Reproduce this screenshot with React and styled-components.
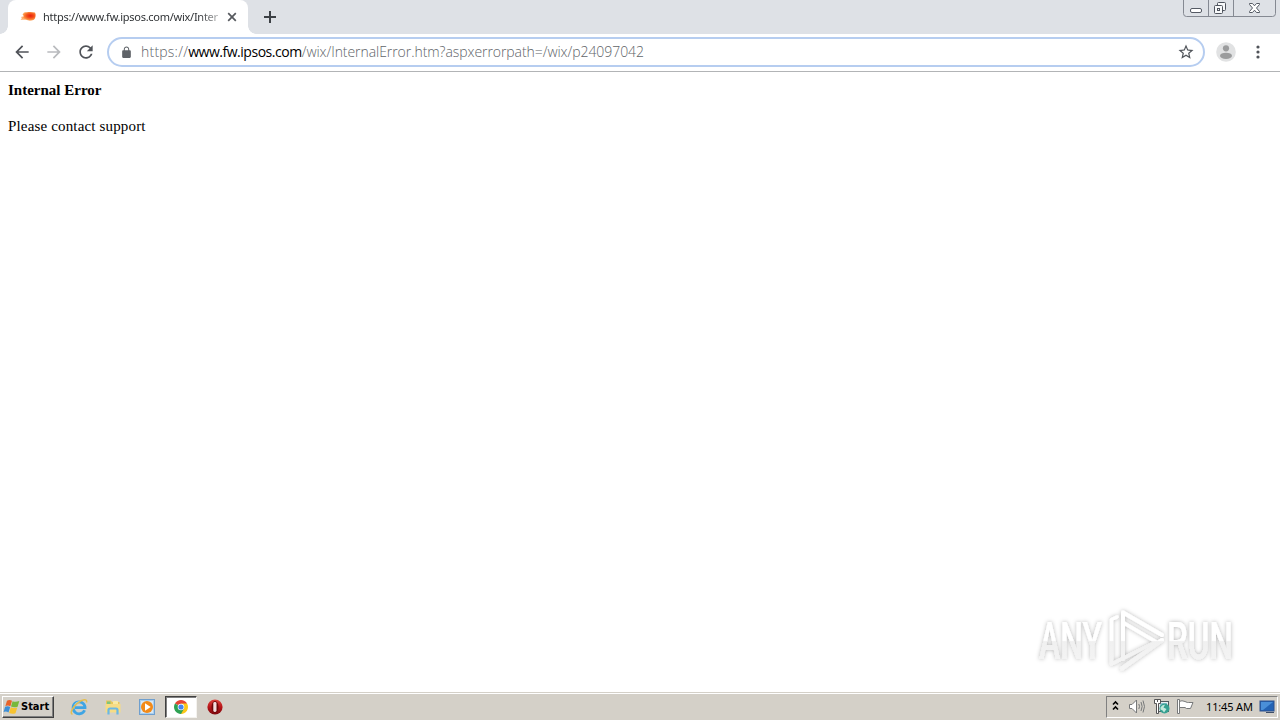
import React from "react";
import styled, { createGlobalStyle } from "styled-components";

const App = () => {
  return (
    <Screen>
      <GlobalStyle />
      <TabStrip>
        <Tab>
          <Favicon />
          <TabTitle>https://www.fw.ipsos.com/wix/Inter</TabTitle>
          <CloseIcon />
        </Tab>
        <NewTabIcon />
        <WindowControls />
      </TabStrip>
      <Toolbar>
        <NavIcon d="M20 11H7.83l5.59-5.59L12 4l-8 8 8 8 1.41-1.41L7.83 13H20v-2z" />
        <NavIcon
          muted
          d="M12 4l-1.41 1.41L16.17 11H4v2h12.17l-5.58 5.59L12 20l8-8z"
        />
        <NavIcon d="M17.65 6.35C16.2 4.9 14.21 4 12 4c-4.42 0-7.99 3.58-7.99 8s3.57 8 7.99 8c3.73 0 6.84-2.55 7.73-6h-2.08c-.82 2.33-3.04 4-5.65 4-3.31 0-6-2.69-6-6s2.69-6 6-6c1.66 0 3.14.69 4.22 1.78L13 11h7V4l-2.35 2.35z" />
        <AddressBar>
          <svg width="13" height="13" viewBox="0 0 24 24" fill="#5f6368">
            <path d="M18 8h-1V6c0-2.76-2.24-5-5-5S7 3.24 7 6v2H6c-1.1 0-2 .9-2 2v10c0 1.1.9 2 2 2h12c1.1 0 2-.9 2-2V10c0-1.1-.9-2-2-2zm-2.9 0H8.9V6c0-1.71 1.39-3.1 3.1-3.1 1.71 0 3.1 1.39 3.1 3.1v2z" />
          </svg>
          <Url>
            <UrlPart $spacing="0.22px">https://</UrlPart>
            <UrlPart $host $spacing="-0.47px">
              www.fw.ipsos.com
            </UrlPart>
            <UrlPart $spacing="-0.06px">
              /wix/InternalError.htm?aspxerrorpath=/wix/p24097042
            </UrlPart>
          </Url>
          <svg width="18" height="18" viewBox="0 0 24 24" fill="#50545a">
            <path d="M22 9.24l-7.19-.62L12 2 9.19 8.63 2 9.24l5.46 4.73L5.82 21 12 17.27 18.18 21l-1.63-7.03L22 9.24zM12 15.4l-3.76 2.27 1-4.28-3.32-2.88 4.38-.38L12 6.1l1.71 4.04 4.38.38-3.32 2.88 1 4.28L12 15.4z" />
          </svg>
        </AddressBar>
        <Avatar />
        <MenuIcon />
      </Toolbar>
      <Page>
        <ErrorTitle>Internal Error</ErrorTitle>
        <ErrorText>Please contact support</ErrorText>
        <Watermark />
      </Page>
      <Taskbar>
        <StartButton>
          <WindowsLogo />
          <span>Start</span>
        </StartButton>
        <QuickLaunch>
          <TaskItem>
            <ExplorerIcon />
          </TaskItem>
          <TaskItem>
            <FolderIcon />
          </TaskItem>
          <TaskItem>
            <PlayerIcon />
          </TaskItem>
          <TaskItem $active>
            <ChromeIcon />
          </TaskItem>
          <TaskItem>
            <OperaIcon />
          </TaskItem>
        </QuickLaunch>
        <Tray>
          <TrayIcons />
          <Clock>11:45 AM</Clock>
          <DesktopIcon />
        </Tray>
      </Taskbar>
    </Screen>
  );
};

const NavIcon = ({ d, muted }) => (
  <NavButton>
    <svg
      width="20"
      height="20"
      viewBox="0 0 24 24"
      fill={muted ? "#b9bbbe" : "#505359"}
    >
      <path d={d} />
    </svg>
  </NavButton>
);

const Favicon = () => (
  <svg width="16" height="16" viewBox="0 0 16 16">
    <defs>
      <radialGradient id="fav" cx="0.65" cy="0.45" r="0.55">
        <stop offset="0" stopColor="#e8200c" />
        <stop offset="0.45" stopColor="#f4501c" />
        <stop offset="0.8" stopColor="#fb8b3c" />
        <stop offset="1" stopColor="#fdb070" />
      </radialGradient>
    </defs>
    <path
      d="M4 3.5C7 2.8 12 2.6 15 3.4C16.2 5.5 15.7 9 14 10.8C11 12 8 11.8 6 10.8L0.6 10.8L2 9L0.8 8L4 7.2L2.5 5.4Z"
      fill="url(#fav)"
    />
  </svg>
);

const CloseIcon = () => (
  <svg width="10" height="10" viewBox="0 0 10 10">
    <path
      d="M1.2 1.2L8.8 8.8M8.8 1.2L1.2 8.8"
      stroke="#56595e"
      strokeWidth="1.7"
    />
  </svg>
);

const NewTabIcon = () => (
  <NewTab>
    <svg width="12" height="12" viewBox="0 0 12 12">
      <path d="M6 0V12M0 6H12" stroke="#3c4045" strokeWidth="2" />
    </svg>
  </NewTab>
);

const WindowControls = () => (
  <Controls>
    <svg width="94" height="18" viewBox="0 0 94 18" fill="none">
      <path
        d="M0.5 0V13.5Q0.5 16.5 3.5 16.5H89.5Q92.5 16.5 92.5 13.5V0"
        stroke="#858992"
      />
      <path d="M25.5 0V16M50.5 0V16" stroke="#858992" />
      <rect
        x="7.5"
        y="8.5"
        width="11"
        height="4"
        rx="1.5"
        fill="#fff"
        stroke="#555a64"
      />
      <g fill="#f8f9fa" stroke="#4f545e">
        <rect x="34.5" y="2.5" width="8" height="8" rx="1" />
        <rect x="31.5" y="5.5" width="8" height="8" rx="1" />
        <rect x="34.5" y="8.5" width="2" height="2" />
      </g>
      <path
        d="M66.5 3.5H69.5L71.5 5.8L73.5 3.5H76.5V4.5L73.5 8L76.5 11.5V12.5H73.5L71.5 10.2L69.5 12.5H66.5V11.5L69.5 8L66.5 4.5Z"
        fill="#fff"
        stroke="#555a64"
      />
    </svg>
  </Controls>
);

const Avatar = () => (
  <svg width="20" height="20" viewBox="0 0 20 20">
    <circle cx="10" cy="10" r="9.8" fill="#e1e2e3" />
    <circle cx="10" cy="6.3" r="3.1" fill="#9b9c9d" />
    <ellipse cx="10" cy="13.8" rx="6" ry="3.1" fill="#9b9c9d" />
  </svg>
);

const MenuIcon = () => (
  <svg width="4" height="14" viewBox="0 0 4 14" fill="#505359">
    <circle cx="2" cy="2" r="1.6" />
    <circle cx="2" cy="7" r="1.6" />
    <circle cx="2" cy="12" r="1.6" />
  </svg>
);

const Watermark = () => (
  <WatermarkBox>
    <svg width="210" height="76" viewBox="1030 602 210 76">
      <defs>
        <linearGradient
          id="mark"
          gradientUnits="userSpaceOnUse"
          x1="0"
          y1="610"
          x2="0"
          y2="672"
        >
          <stop offset="0" stopColor="#fff" />
          <stop offset="0.49" stopColor="#fff" />
          <stop offset="0.51" stopColor="#f0f0f0" />
          <stop offset="1" stopColor="#f6f6f6" />
        </linearGradient>
        <filter id="glow" x="-10%" y="-20%" width="120%" height="140%">
          <feDropShadow
            dx="0"
            dy="0"
            stdDeviation="1.9"
            floodColor="#000"
            floodOpacity="0.3"
          />
        </filter>
      </defs>
      <g filter="url(#glow)">
        <g
          fill="url(#mark)"
          fontFamily="Roboto, sans-serif"
          fontWeight="500"
          fontSize="51"
        >
          <text
            x="1039"
            y="659"
            textLength="63"
            lengthAdjust="spacingAndGlyphs"
          >
            ANY
          </text>
          <text
            x="1167"
            y="659"
            textLength="66"
            lengthAdjust="spacingAndGlyphs"
          >
            RUN
          </text>
        </g>
        <g
          fill="none"
          stroke="url(#mark)"
          strokeWidth="4"
          strokeLinejoin="round"
          strokeLinecap="round"
        >
          <path d="M1123 659V612.5L1162 635" />
          <path d="M1123 622.5L1158 643" strokeWidth="3.6" />
          <path d="M1117 617L1111.5 619.5V664L1155 642.5" strokeWidth="3.4" />
          <path d="M1162 640L1122 668.5" />
        </g>
      </g>
    </svg>
  </WatermarkBox>
);

const WindowsLogo = () => (
  <svg width="16" height="16" viewBox="0 0 16 16">
    <path d="M3 1.7Q5.5 .3 8 1.8L6.4 7.2Q4 5.8 1.4 7Z" fill="#e8632a" />
    <path d="M8.6 2.2Q11.5 3.5 15.3 2L13.6 7.8Q10.2 9 7 7.6Z" fill="#78b83b" />
    <path d="M1.1 7.7Q3.8 6.5 6.2 7.9L4.5 13.5Q2.2 12 -.4 13Z" fill="#3d8fd6" />
    <path d="M6.8 8.3Q10 9.7 13.3 8.5L11.5 14.2Q8.5 15.4 5.1 14Z" fill="#f7c331" />
  </svg>
);

const ExplorerIcon = () => (
  <svg width="18" height="18" viewBox="0 0 18 18" fill="none">
    <path
      d="M14.6 12.2A6 6 0 1 1 15 8.8V9.7H5"
      stroke="#3fa5e4"
      strokeWidth="2.8"
    />
    <path d="M4.5 7.2Q6 3.7 9.5 3.6" stroke="#a6def9" />
    <path
      d="M2.5 16.2C-.5 15.6 2.2 9.6 7.5 5.2C12 1.2 17.8 .2 16.5 4.5"
      stroke="#e4be50"
      strokeWidth="1.5"
    />
  </svg>
);

const FolderIcon = () => (
  <svg width="18" height="18" viewBox="0 0 18 18">
    <path d="M2 2.5H7L8 4H15.5V14H2Z" fill="#e9c75b" />
    <path d="M3 3.5H6.5V7H3Z" fill="#7fc57c" />
    <path d="M9 3H14V7H9Z" fill="#f8e9a4" />
    <path d="M1.5 6H16.5V14.5H1.5Z" fill="#f6dc85" />
    <path
      d="M4.5 16.5V12Q4.5 10.5 6 10.5H12Q13.5 10.5 13.5 12V16.5"
      fill="none"
      stroke="#6bb8e4"
      strokeWidth="2.2"
    />
  </svg>
);

const PlayerIcon = () => (
  <svg width="18" height="18" viewBox="0 0 18 18">
    <rect x="1.5" y="1.5" width="15" height="15" fill="#a9cfef" stroke="#6f9fce" />
    <rect x="3" y="3" width="12" height="12" fill="#d9e8f4" />
    <circle cx="9" cy="9" r="6" fill="#f28a18" />
    <path d="M7 5.2L12.7 9L7 12.8Z" fill="#fff" />
  </svg>
);

const ChromeIcon = () => (
  <svg width="14" height="14" viewBox="0 0 14 14">
    <path d="M7 7L.94 3.5A7 7 0 0 1 13.06 3.5Z" fill="#e64434" />
    <path d="M7 7L13.06 3.5A7 7 0 0 1 7 14Z" fill="#fbc718" />
    <path d="M7 7V14A7 7 0 0 1 .94 3.5Z" fill="#2fa253" />
    <path d="M7 3.5H13.06L10 8.7Z" fill="#fbc718" />
    <path d="M10 8.7L7 14L4.5 8.5Z" fill="#2fa253" />
    <circle cx="7" cy="7" r="3.3" fill="#fff" />
    <circle cx="7" cy="7" r="2.6" fill="#4484ef" />
  </svg>
);

const OperaIcon = () => (
  <svg width="16" height="16" viewBox="0 0 16 16">
    <defs>
      <linearGradient id="opera" x1="0" y1="0" x2="0" y2="1">
        <stop offset="0" stopColor="#e0433c" />
        <stop offset="0.55" stopColor="#b31217" />
        <stop offset="1" stopColor="#7b080d" />
      </linearGradient>
    </defs>
    <circle cx="8" cy="8" r="7.6" fill="url(#opera)" />
    <ellipse cx="8" cy="8" rx="3.5" ry="5.9" fill="#6e0709" />
    <rect x="6.3" y="3" width="3.2" height="10" rx="1.4" fill="#f3dcdc" />
  </svg>
);

const TrayIcons = () => (
  <svg width="90" height="20" viewBox="0 0 90 20" fill="none">
    <path d="M3 7.5L5.5 5L8 7.5M3 12.5L5.5 10L8 12.5" stroke="#000" strokeWidth="1.6" />
    {/* speaker */}
    <path d="M19.5 7.5H22L26.5 3V16L22 11.5H19.5Z" fill="#fff" stroke="#77797a" />
    <path
      d="M28.8 7Q30.3 9.5 28.8 12M31 5Q33.3 9.5 31 14M33 3.5Q36 9.5 33 15.5"
      stroke="#77797a"
    />
    {/* network */}
    <rect x="48.5" y="4.5" width="10" height="10" fill="#e9eef0" stroke="#4f5b60" />
    <rect x="50" y="6" width="7" height="7" fill="#8fc3d3" />
    <circle cx="54.5" cy="11.5" r="5" fill="#35a091" />
    <path d="M50.5 10.5Q52 7.5 55 7.8L53.5 10.5L56.5 12L54 15.5Q53 13 50.5 12.5Z" fill="#c2e8dc" />
    <path
      d="M44.5 2.5H50.5V6.5H48.5V16.5H46.5V6.5H44.5Z"
      fill="#fff"
      stroke="#555"
    />
    <path d="M47.5 2V5" stroke="#555" />
    {/* action center flag */}
    <path
      d="M69 4.5Q72 3 75 4.5T78.5 5.5H83L80.5 11.5H76.5L75 10.5H69Z"
      fill="#fff"
      stroke="#77797a"
    />
    <path d="M67.5 2.5H69.5V16.5H67.5Z" fill="#fff" stroke="#77797a" />
  </svg>
);

const DesktopIcon = () => (
  <svg width="17" height="16" viewBox="0 0 17 16">
    <rect x="1" y="2" width="14" height="10" fill="#2363b5" stroke="#2c518c" />
    <path d="M2 3H14L4 11H2Z" fill="#4a8fd8" />
    <path d="M7 13H15V14H7Z" fill="#3d4d68" />
  </svg>
);

const GlobalStyle = createGlobalStyle`
  body {
    margin: 0;
    overflow: hidden;
  }
  * {
    box-sizing: border-box;
  }
  svg {
    display: block;
    flex-shrink: 0;
    overflow: visible;
  }
`;

const Screen = styled.div`
  width: 1280px;
  height: 720px;
  display: flex;
  flex-direction: column;
  background: #fff;
`;

const TabStrip = styled.div`
  height: 34px;
  flex-shrink: 0;
  display: flex;
  padding-left: 8px;
  background: #dee1e6;
`;

const Tab = styled.div`
  width: 240px;
  height: 34px;
  display: flex;
  align-items: center;
  padding: 0 11px 0 12px;
  background: #fff;
  border-radius: 8px 8px 0 0;
  position: relative;
  /* curved feet of the tab */
  &::before,
  &::after {
    content: "";
    position: absolute;
    bottom: 0;
    width: 8px;
    height: 8px;
  }
  &::before {
    left: -8px;
    background: radial-gradient(circle at 0 0, #dee1e6 7.5px, #fff 8px);
  }
  &::after {
    right: -8px;
    background: radial-gradient(circle at 100% 0, #dee1e6 7.5px, #fff 8px);
  }
`;

const TabTitle = styled.div`
  width: 177px;
  margin: 0 7px;
  padding-bottom: 2px;
  overflow: hidden;
  white-space: nowrap;
  font-family: "Noto Sans", sans-serif;
  font-size: 11px;
  letter-spacing: -0.27px;
  color: #303336;
  mask-image: linear-gradient(to right, #000 88%, rgba(0, 0, 0, 0.3));
`;

const NewTab = styled.div`
  display: flex;
  align-items: center;
  padding-left: 16px;
`;

const Controls = styled.div`
  margin-left: auto;
  padding-right: 3px;
`;

const Toolbar = styled.div`
  height: 38px;
  flex-shrink: 0;
  display: flex;
  align-items: center;
  padding: 0 20px 1px 6px;
  border-bottom: 1px solid #b2b4b6;
  > svg:last-child {
    margin-left: 20px;
  }
`;

const NavButton = styled.div`
  width: 32px;
  display: grid;
  place-items: center;
`;

const AddressBar = styled.div`
  width: 1098px;
  height: 30px;
  display: flex;
  align-items: center;
  margin: 0 11px 0 5px;
  padding: 0 8px 0 11px;
  border: 2px solid #b6cdf0;
  border-radius: 15px;
`;

const Url = styled.div`
  flex: 1;
  display: flex;
  margin-left: 8px;
  padding-bottom: 2px;
  font-family: "Open Sans", "Noto Sans", sans-serif;
  font-size: 14px;
  white-space: nowrap;
`;

const UrlPart = styled.span`
  color: ${(props) => (props.$host ? "#000" : "#606468")};
  font-weight: ${(props) => (props.$host ? 400 : 300)};
  letter-spacing: ${(props) => props.$spacing};
`;

const Page = styled.div`
  height: 620px;
  flex-shrink: 0;
  padding: 9px 8px;
  position: relative;
  font-family: "Liberation Serif", serif;
  font-size: 15px;
  line-height: 18px;
  color: #000;
`;

const ErrorTitle = styled.div`
  font-weight: bold;
`;

const ErrorText = styled.div`
  margin-top: 18px;
  letter-spacing: 0.16px;
`;

const WatermarkBox = styled.div`
  position: absolute;
  right: 40px;
  bottom: 14px;
`;

const Taskbar = styled.div`
  height: 28px;
  display: flex;
  align-items: center;
  padding: 1px 2px 0;
  background: #d4d0c8;
  border-top: 1px solid #d4d0c8;
  box-shadow: inset 0 1px #fff;
`;

const StartButton = styled.div`
  width: 52px;
  height: 22px;
  display: flex;
  align-items: center;
  gap: 1px;
  padding-left: 1px;
  border: 1px solid;
  border-color: #fff #404040 #404040 #fff;
  box-shadow: inset -1px -1px #808080;
  font-family: "DejaVu Sans Condensed", "DejaVu Sans", sans-serif;
  font-size: 11px;
  font-weight: bold;
  span {
    padding-bottom: 1px;
  }
`;

const QuickLaunch = styled.div`
  display: flex;
  align-items: center;
  gap: 2px;
  margin-left: 9px;
`;

const TaskItem = styled.div`
  width: 32px;
  height: 22px;
  display: grid;
  place-items: center;
  border: 1px solid transparent;
  ${(props) =>
    props.$active &&
    `
    background: #fff;
    border-color: #404040 #f4f2ee #f4f2ee #404040;
    box-shadow: inset 1px 1px #808080;
  `}
`;

const Tray = styled.div`
  width: 172px;
  height: 22px;
  display: flex;
  align-items: center;
  margin-left: auto;
  padding-left: 3px;
  border: 1px solid;
  border-color: #808080 #fff #fff #808080;
`;

const Clock = styled.div`
  width: 53px;
  margin-left: 6px;
  padding-bottom: 2px;
  font-family: "Noto Sans", sans-serif;
  font-size: 11px;
  letter-spacing: -0.15px;
  white-space: nowrap;
  color: #000;
`;

export default App;
